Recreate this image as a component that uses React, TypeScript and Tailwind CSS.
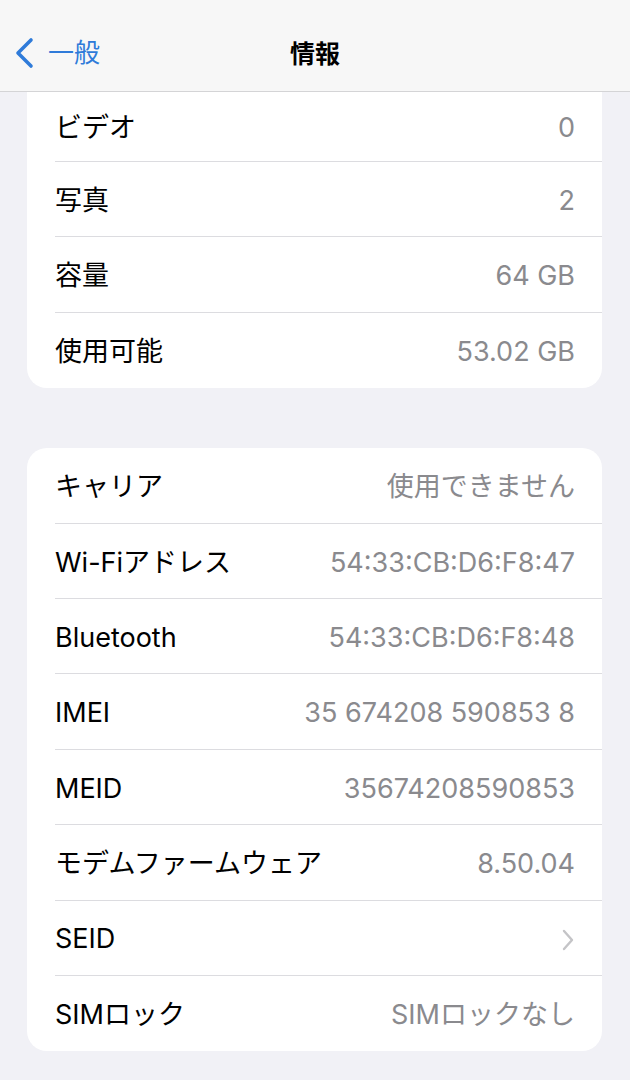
import React from 'react'

const font = { fontFamily: 'Inter, "Noto Sans CJK JP", sans-serif' }

type Row = { label: string; value?: string; chevron?: boolean }

const storage: Row[] = [
  { label: 'ビデオ', value: '0' },
  { label: '写真', value: '2' },
  { label: '容量', value: '64 GB' },
  { label: '使用可能', value: '53.02 GB' },
]

const network: Row[] = [
  { label: 'キャリア', value: '使用できません' },
  { label: 'Wi-Fiアドレス', value: '54:33:CB:D6:F8:47' },
  { label: 'Bluetooth', value: '54:33:CB:D6:F8:48' },
  { label: 'IMEI', value: '35 674208 590853 8' },
  { label: 'MEID', value: '35674208590853' },
  { label: 'モデムファームウェア', value: '8.50.04' },
  { label: 'SEID', chevron: true },
  { label: 'SIMロック', value: 'SIMロックなし' },
]

function Chevron() {
  return (
    <svg width="14" height="24" viewBox="0 0 14 24" fill="none">
      <path d="M3 3l8 9-8 9" stroke="#c4c4c7" strokeWidth="2.4" strokeLinecap="round" strokeLinejoin="round" />
    </svg>
  )
}

function Group({ rows, first }: { rows: Row[]; first?: boolean }) {
  return (
    <div className={`bg-white ml-[27px] mr-[28px] ${first ? 'rounded-b-[20px]' : 'rounded-[20px]'} overflow-hidden`}>
      {rows.map((r, i) => (
        <div key={r.label} className="pl-[28px]">
          <div
            className={`flex items-center justify-between pr-[27px] pt-[4px] ${i === 0 && first ? 'h-[70px]' : 'h-[75.4px]'} ${i < rows.length - 1 ? 'border-b border-[#dcdce0]' : ''}`}
          >
            <span className="text-[27px] text-black">{r.label}</span>
            {r.chevron ? <Chevron /> : <span className="text-[27px] text-[#8a8a8e]">{r.value}</span>}
          </div>
        </div>
      ))}
    </div>
  )
}

export default function App() {
  return (
    <div className="w-[630px] h-[1080px] bg-[#f1f1f6] overflow-hidden" style={font}>
      <div className="h-[92px] bg-[#f7f7f7] border-b border-[#d4d4d6] relative flex items-center">
        <div className="flex items-center pl-[14px] pt-[14px] gap-[12px] text-[#2f7bd9]">
          <svg width="22" height="32" viewBox="0 0 22 32" fill="none">
            <path d="M17 3L4 16l13 13" stroke="#2f7bd9" strokeWidth="3.6" strokeLinecap="round" strokeLinejoin="round" />
          </svg>
          <span className="text-[26px]">一般</span>
        </div>
        <div className="absolute left-0 right-0 top-[18px] bottom-0 flex items-center justify-center">
          <span className="text-[25px] font-bold text-black">情報</span>
        </div>
      </div>
      <Group rows={storage} first />
      <div className="h-[60px]" />
      <Group rows={network} />
    </div>
  )
}
